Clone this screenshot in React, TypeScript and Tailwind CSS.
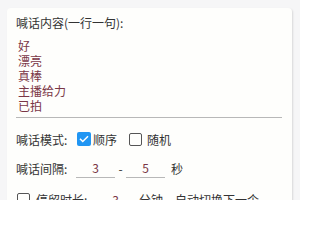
import React from "react"

const lines = ["好", "漂亮", "真棒", "主播给力", "已拍"]

function Box({ checked }: { checked?: boolean }) {
  if (checked)
    return (
      <span className="flex h-[14px] w-[14px] items-center justify-center rounded-[2px] bg-[#2196f3]">
        <svg viewBox="0 0 24 24" className="h-[12px] w-[12px]" fill="none" stroke="#fff" strokeWidth="3" strokeLinecap="square">
          <path d="M5 12.5l4.5 4.5L19 7.5" />
        </svg>
      </span>
    )
  return <span className="block h-[13px] w-[13px] rounded-[2px] border-[1.5px] border-[#555]" />
}

function NumField({ value, w }: { value: string; w: string }) {
  return (
    <div className={`flex h-[20px] items-center justify-center border-b border-[#b8b8b8] text-[#7a3646] ${w}`}>
      {value}
    </div>
  )
}

export default function App() {
  return (
    <div
      className="h-[200px] w-[300px] overflow-hidden bg-[#f6f6f7] pl-[7px] pr-[8px] pt-[8px] text-[12px] leading-[15px] text-[#333]"
      style={{ fontFamily: '"Noto Sans CJK SC", "Noto Sans", sans-serif' }}
    >
      <div className="h-[260px] rounded-[4px] bg-[#fefefc] px-[9px] pt-[7px] shadow-[1px_1px_2px_rgba(0,0,0,0.12)]">
        {/* 内容 */}
        <div>喊话内容(一行一句):</div>
        <div className="mt-[8px] w-[266px] border-b border-[#b8b8b8] pb-[4px] pl-[2px] text-[#7a3646]">
          {lines.map((l) => (
            <div key={l}>{l}</div>
          ))}
        </div>

        {/* 模式 */}
        <div className="mt-[13px] flex h-[16px] items-center">
          <span className="w-[61px]">喊话模式:</span>
          <Box checked />
          <span className="ml-[2px] w-[36px]">顺序</span>
          <Box />
          <span className="ml-[5px]">随机</span>
        </div>

        {/* 间隔 */}
        <div className="mt-[11px] flex items-center">
          <span className="w-[60px]">喊话间隔:</span>
          <NumField value="3" w="w-[39px]" />
          <span className="w-[11px] text-center">-</span>
          <NumField value="5" w="w-[39px]" />
          <span className="ml-[6px]">秒</span>
        </div>

        {/* 停留 */}
        <div className="mt-[14px] flex items-center">
          <span className="ml-[1px]"><Box /></span>
          <span className="ml-[6px] w-[60px]">停留时长:</span>
          <span className="w-[39px] text-center text-[#7a3646]">3</span>
          <span className="ml-[4px]">分钟，自动切换下一个</span>
        </div>
      </div>
    </div>
  )
}
